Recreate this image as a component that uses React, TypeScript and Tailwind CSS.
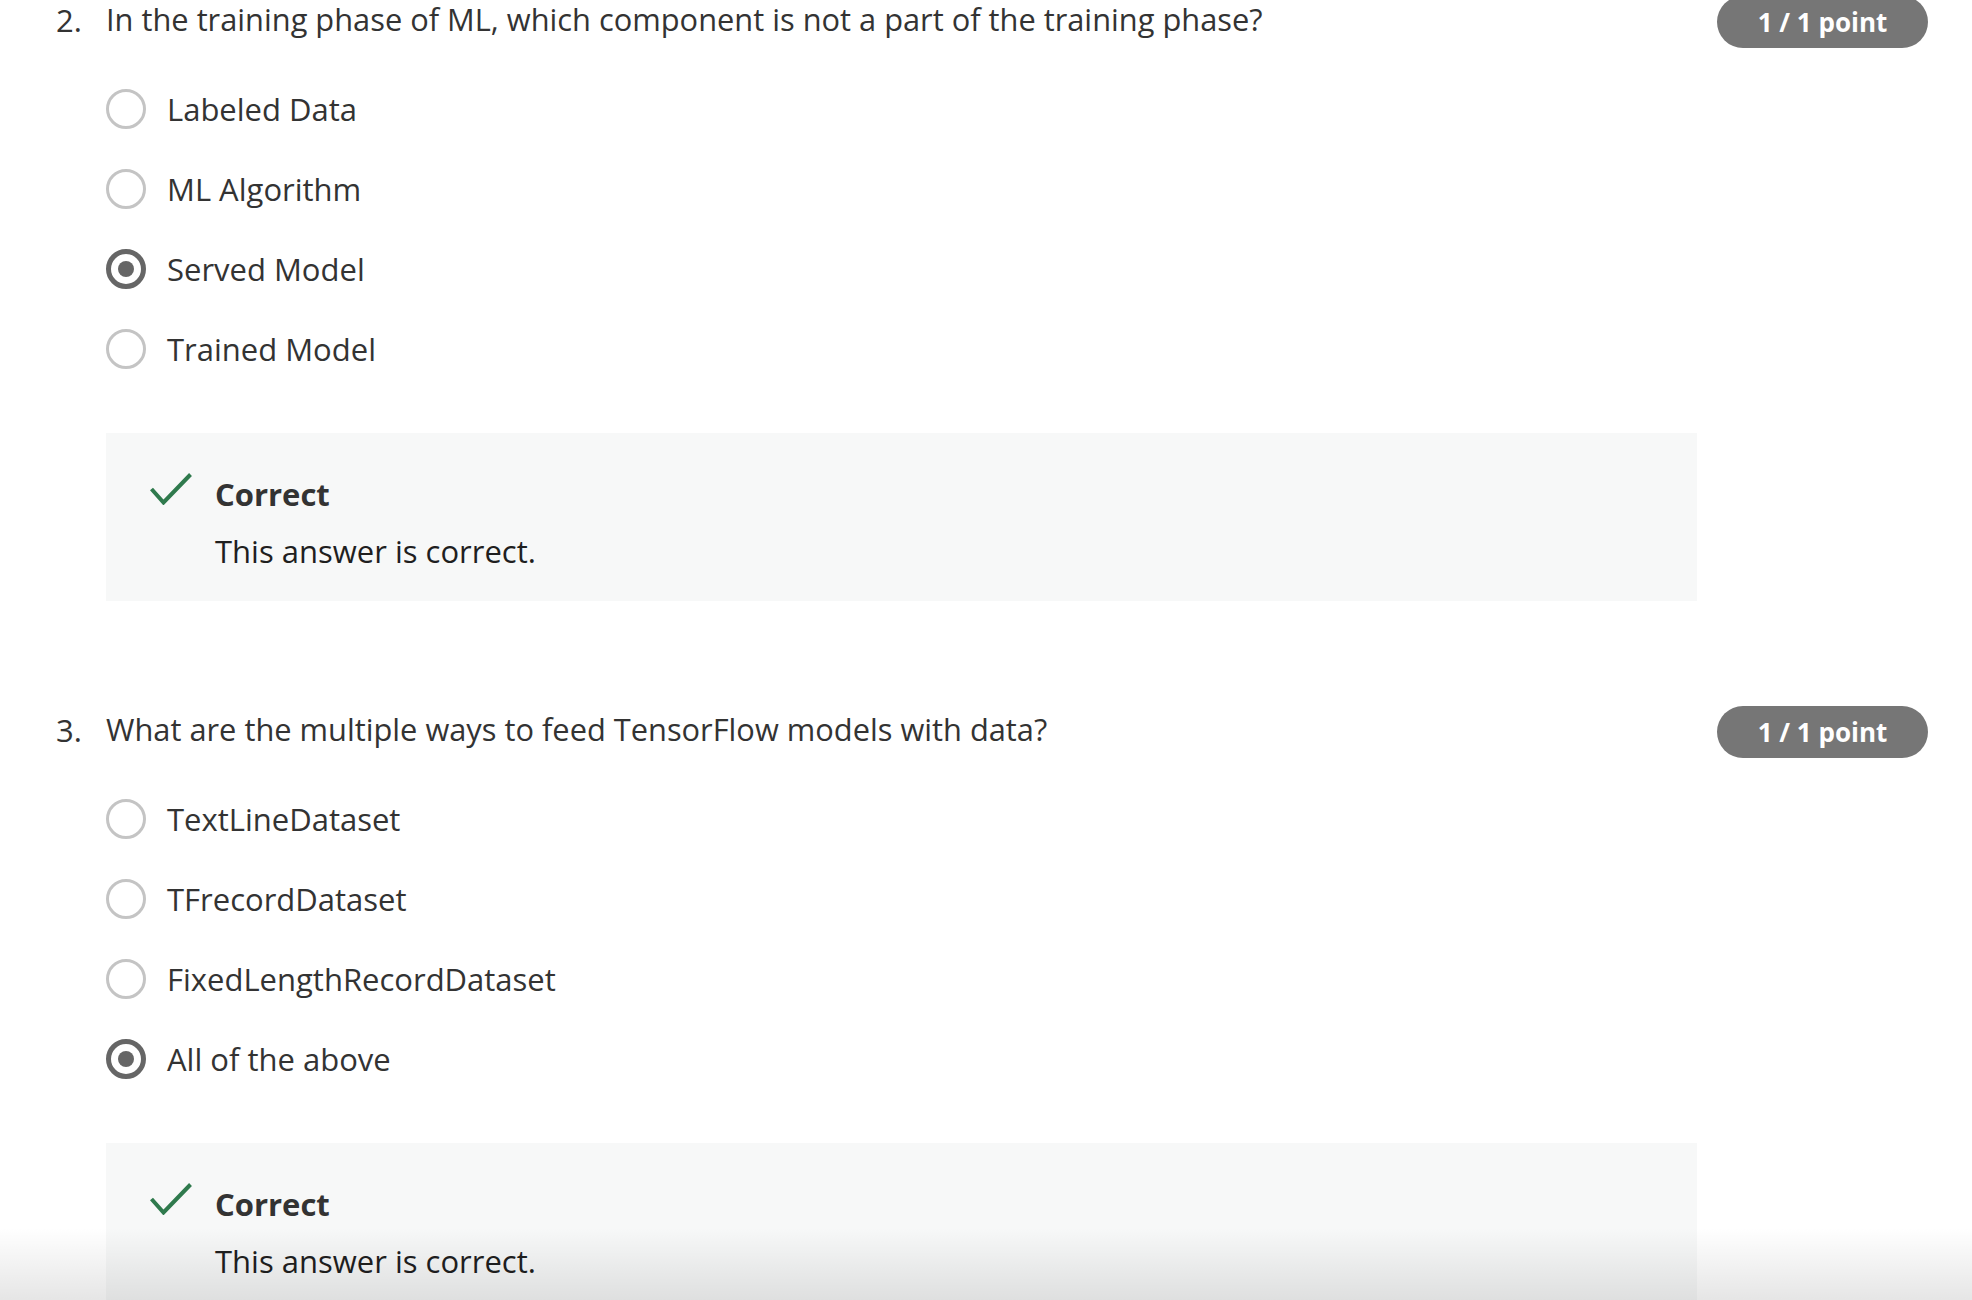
import React from 'react';

interface Question {
    num: number;
    text: string;
    options: string[];
    selected: number;
}

const questions: Question[] = [
    {
        num: 2,
        text: 'In the training phase of ML, which component is not a part of the training phase?',
        options: ['Labeled Data', 'ML Algorithm', 'Served Model', 'Trained Model'],
        selected: 2,
    },
    {
        num: 3,
        text: 'What are the multiple ways to feed TensorFlow models with data?',
        options: ['TextLineDataset', 'TFrecordDataset', 'FixedLengthRecordDataset', 'All of the above'],
        selected: 3,
    },
];

function Radio({ checked }: { checked: boolean }) {
    if (checked) {
        return (
            <span className="flex h-[40px] w-[40px] shrink-0 items-center justify-center rounded-full border-[5px] border-[#666666]">
                <span className="h-[16px] w-[16px] rounded-full bg-[#666666]" />
            </span>
        );
    }
    return <span className="h-[40px] w-[40px] shrink-0 rounded-full border-[3px] border-[#c4c4c4]" />;
}

function CheckIcon() {
    return (
        <svg width="42" height="32" viewBox="0 0 42 32" className="shrink-0">
            <polyline points="1.5,16 13.5,29.5 40.5,1.5" fill="none" stroke="#2f7a4d" strokeWidth="4" />
        </svg>
    );
}

function QuestionBlock({ q }: { q: Question }) {
    return (
        <section className="flex items-start pl-[56px] pr-[44px]">
            <span className="w-[50px] shrink-0 text-[31px] leading-[48px]">{q.num}.</span>
            <div className="min-w-0 flex-1">
                <h2 className="text-[30.8px] font-normal leading-[47px]">{q.text}</h2>

                {/* Answer options */}
                <div className="mt-[26px]">
                    {q.options.map((opt, i) => (
                        <label key={opt} className="flex h-[80px] items-center gap-[21px]">
                            <Radio checked={i === q.selected} />
                            <span className="text-[31px]">{opt}</span>
                        </label>
                    ))}
                </div>

                {/* Feedback */}
                <div className="mt-[44px] flex h-[168px] items-start gap-[23px] bg-[#f7f8f8] pl-[44px] pt-[40px]">
                    <CheckIcon />
                    <div>
                        <div className="text-[31px] font-bold leading-[42px] text-[#333333]">Correct</div>
                        <div className="mt-[15px] text-[31px] leading-[42px] text-[#1f1f1f]">This answer is correct.</div>
                    </div>
                </div>
            </div>
            <div className="ml-[20px] flex h-[52px] w-[211px] shrink-0 items-center justify-center rounded-full bg-[#767676] text-[26px] font-bold text-white">
                1 / 1 point
            </div>
        </section>
    );
}

export default function App() {
    return (
        <div className="relative h-[1300px] overflow-hidden bg-white font-['Open_Sans',sans-serif] text-[#333333]">
            <div className="-mt-[4px] flex flex-col gap-[105px]">
                {questions.map((q) => (
                    <QuestionBlock key={q.num} q={q} />
                ))}
            </div>
            {/* scroll fade at the bottom */}
            <div className="pointer-events-none absolute inset-x-0 bottom-0 h-[72px] bg-linear-to-b from-transparent to-black/10" />
        </div>
    );
}
